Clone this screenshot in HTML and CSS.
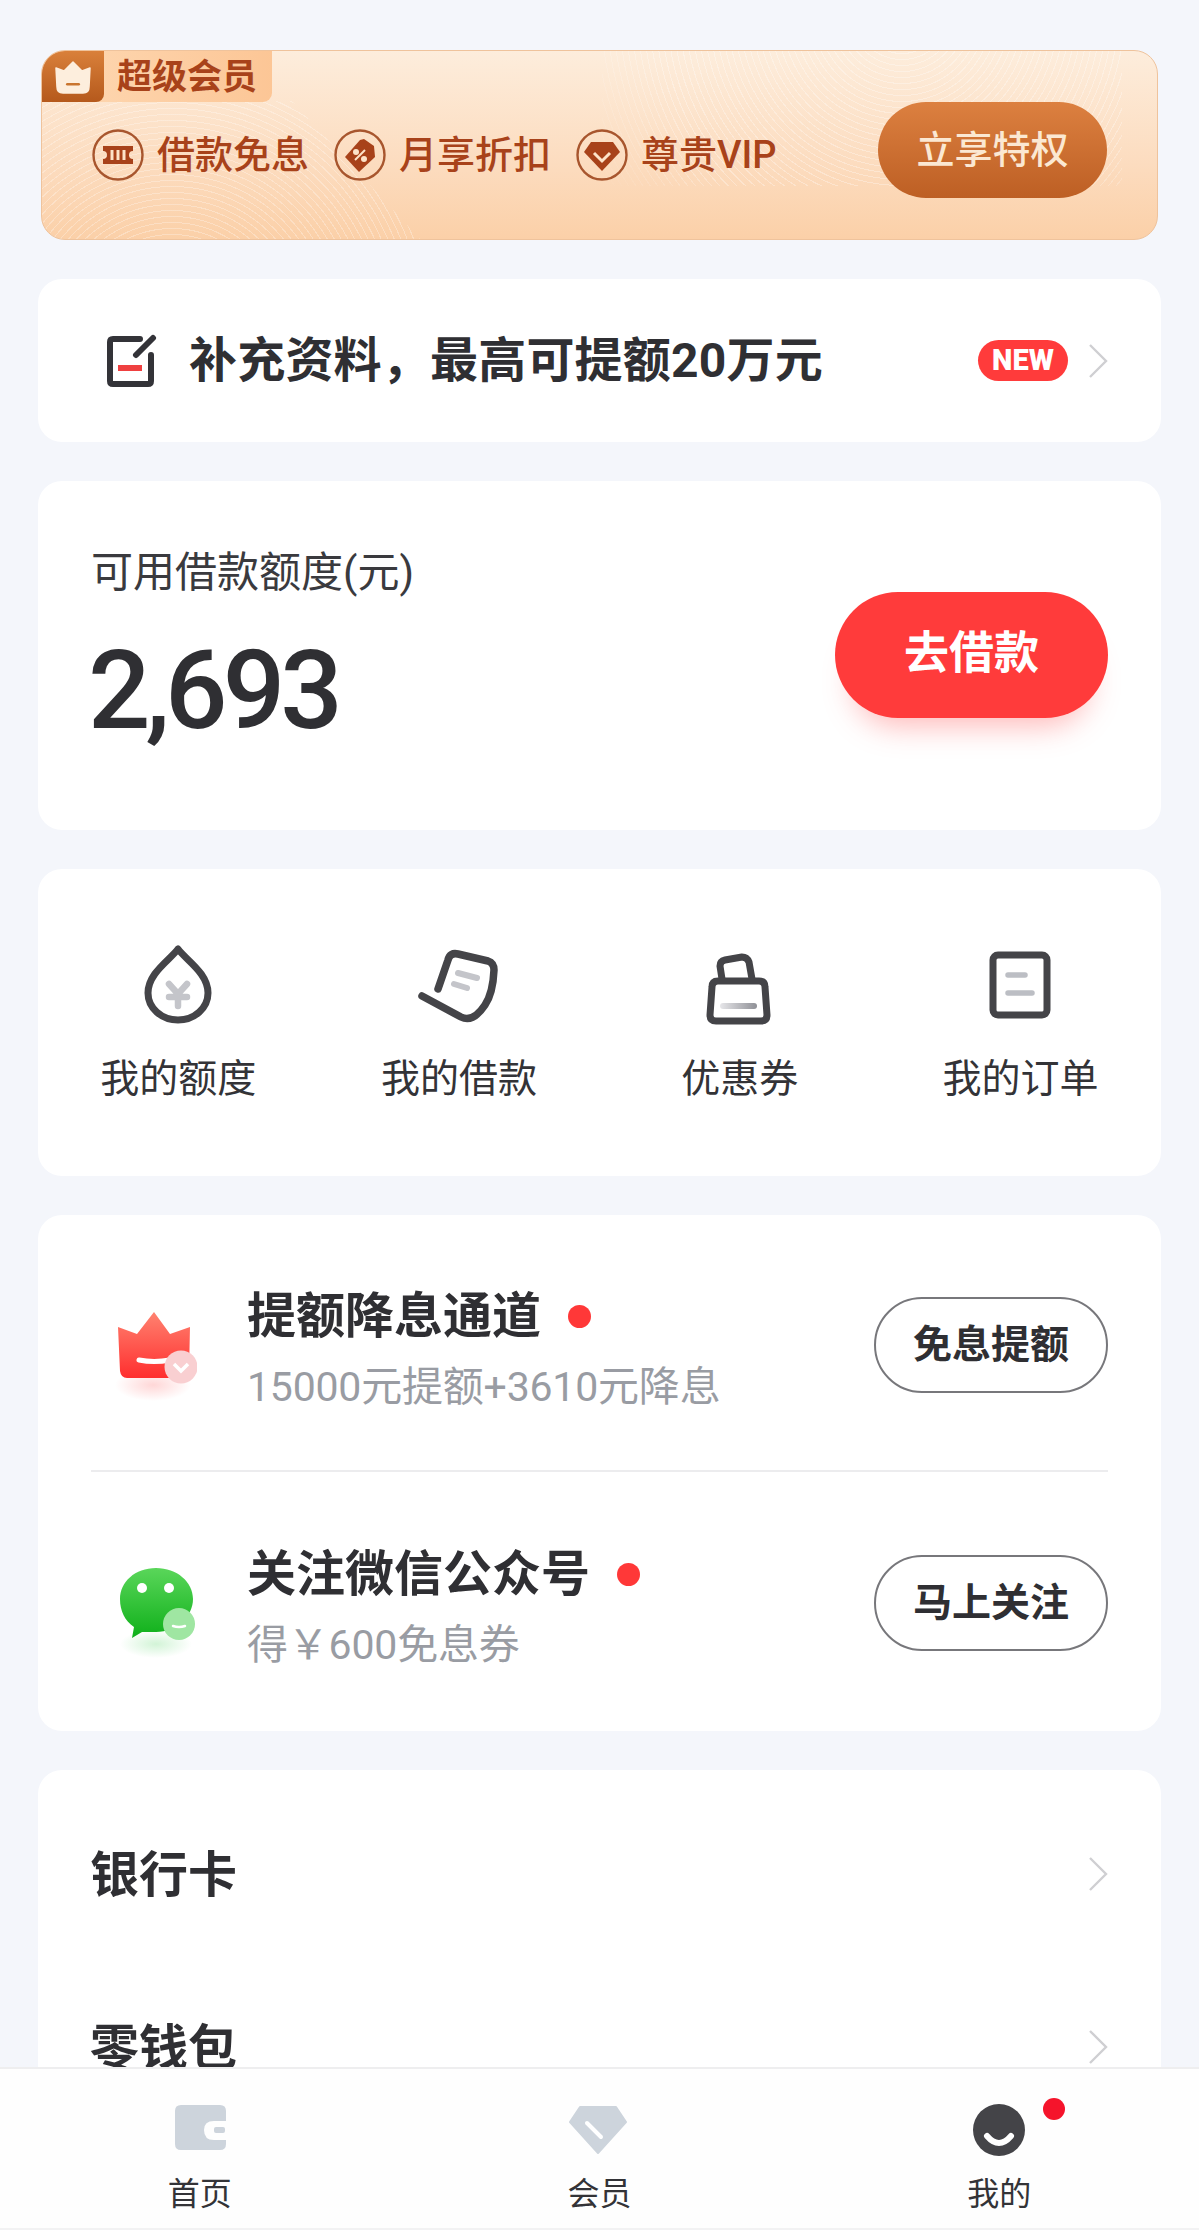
FILE: index.html
```html
<!DOCTYPE html>
<html lang="zh-CN">
<head>
<meta charset="utf-8">
<title>我的</title>
<link rel="stylesheet" href="styles.css">
</head>
<body>
<div class="page">
  <section class="banner">
    <div class="waves-left"></div>
    <div class="waves-right"></div>
    <div class="ribbon">
      <span class="ribbon-icon">
        <svg width="40" height="36" viewBox="0 0 40 36"><path d="M3 9 L11 12 L20 3 L29 12 L37 9 L36 28 Q36 34 30 34 L10 34 Q4 34 4 28 Z" fill="#fdeedd" stroke="#fdeedd" stroke-linejoin="round" stroke-width="1.5"/><rect x="13" y="24" width="14" height="2.5" rx="1.2" fill="#c9752f"/></svg>
      </span>
      <span class="ribbon-text">超级会员</span>
    </div>
    <div class="banner-row">
      <div class="perks">
        <div class="perk">
          <svg class="perk-icon" viewBox="0 0 52 52"><circle cx="26" cy="26" r="24.5" class="perk-ring"/><path d="M11 17 H41 V22 A4 4 0 0 0 41 30 V35 H11 V30 A4 4 0 0 0 11 22 Z" fill="#a8421a"/><path d="M20 21 V31 M26 21 V31 M32 21 V31" stroke="#fde3c9" stroke-width="3"/></svg>
          <span class="perk-text">借款免息</span>
        </div>
        <div class="perk">
          <svg class="perk-icon" viewBox="0 0 52 52"><circle cx="26" cy="26" r="24.5" class="perk-ring"/><path d="M30 10 L40 17 L41 28 L25 43 L11 28 L26 11 Z" fill="#a8421a"/><path d="M21 31 L31 21" stroke="#fde3c9" stroke-width="2"/><circle cx="22" cy="23" r="3" fill="#fde3c9"/><circle cx="30" cy="30" r="3" fill="#fde3c9"/></svg>
          <span class="perk-text">月享折扣</span>
        </div>
        <div class="perk">
          <svg class="perk-icon" viewBox="0 0 52 52"><circle cx="26" cy="26" r="24.5" class="perk-ring"/><path d="M15 13 H37 L44 23 L26 42 L8 23 Z" fill="#a8421a"/><path d="M18 24 L26 32 L34 24" fill="none" stroke="#fde3c9" stroke-width="3"/></svg>
          <span class="perk-text">尊贵VIP</span>
        </div>
      </div>
      <div class="perk-btn">立享特权</div>
    </div>
  </section>

  <section class="card card-info">
    <svg class="edit-icon" width="50" height="54" viewBox="0 0 50 54"><path d="M33 5 H6 Q3 5 3 8 V47 Q3 50 6 50 H41 Q44 50 44 47 V21" fill="none" stroke="#333338" stroke-width="6" stroke-linecap="round"/><path d="M29 21 L46 4" fill="none" stroke="#333338" stroke-width="6" stroke-linecap="round"/><rect x="11" y="31" width="24" height="6" fill="#ef4040"/></svg>
    <span class="info-text">补充资料，最高可提额20万元</span>
    <span class="new-badge">NEW</span>
    <svg class="chevron" width="20" height="36" viewBox="0 0 20 36"><path d="M2 2 L18 18 L2 34" fill="none" stroke="#cfcfd2" stroke-width="2.4"/></svg>
  </section>

  <section class="card card-quota">
    <div class="quota-left">
      <div class="quota-label">可用借款额度(元)</div>
      <div class="quota-num">2,693</div>
    </div>
    <div class="borrow-btn">去借款</div>
  </section>

  <section class="card card-grid">
    <div class="grid-item">
      <svg class="grid-icon" viewBox="0 0 84 84"><path d="M42 6 C34 17 12 30 12 50 A30 27 0 0 0 72 50 C72 30 50 17 42 6 Z" fill="none" stroke="#444448" stroke-width="7" stroke-linejoin="round"/><path d="M33 41 L42 51 L51 41 M33 54 H51 M42 51 V63" fill="none" stroke="#c4c5ca" stroke-width="6.5" stroke-linecap="round"/></svg>
      <span class="grid-label">我的额度</span>
    </div>
    <div class="grid-item">
      <svg class="grid-icon" viewBox="0 0 84 84"><path d="M21 46 L31 17 Q33 9 41 11 L71 18 Q77 20 77 27 Q76 50 68 62 Q56 80 44 74 L5 53" fill="none" stroke="#444448" stroke-width="7.5" stroke-linecap="round" stroke-linejoin="round"/><path d="M41 30 L60 35 M37 41 L50 45" stroke="#c4c5ca" stroke-width="6" stroke-linecap="round"/></svg>
      <span class="grid-label">我的借款</span>
    </div>
    <div class="grid-item">
      <svg class="grid-icon" viewBox="0 0 84 84"><path d="M24 36 L22 23 Q22 18 27 17 L44 14 Q49 14 51 19 L54 36" fill="none" stroke="#444448" stroke-width="7" stroke-linejoin="round"/><path d="M20 38 H61 Q67 38 67 44 L69 72 Q69 78 63 78 H18 Q12 78 12 72 L14 44 Q14 38 20 38 Z" fill="none" stroke="#444448" stroke-width="7"/><defs><linearGradient id="barG" x1="0" x2="1" y1="0" y2="0"><stop offset="0" stop-color="#e6e6e9"/><stop offset="1" stop-color="#8f9096"/></linearGradient></defs><rect x="22" y="60" width="37" height="6" rx="3" fill="url(#barG)"/></svg>
      <span class="grid-label">优惠券</span>
    </div>
    <div class="grid-item">
      <svg class="grid-icon" viewBox="0 0 84 84"><rect x="14" y="12" width="54" height="60" rx="5" fill="none" stroke="#444448" stroke-width="7"/><path d="M29 32 H46 M29 50 H53" stroke="#bcbec4" stroke-width="5.5" stroke-linecap="round"/></svg>
      <span class="grid-label">我的订单</span>
    </div>
  </section>

  <section class="card card-tasks">
    <div class="task">
      <svg class="task-icon" width="84" height="100" viewBox="0 0 84 100"><defs><linearGradient id="crownG" x1="0" x2="0" y1="0" y2="1"><stop offset="0" stop-color="#ff8270"/><stop offset="1" stop-color="#ff2e2e"/></linearGradient><radialGradient id="redSh"><stop offset="0" stop-color="#ff9a9a" stop-opacity=".4"/><stop offset="1" stop-color="#ff9a9a" stop-opacity="0"/></radialGradient><linearGradient id="greenG" x1="0" x2="0" y1="0" y2="1"><stop offset="0" stop-color="#5ad65a"/><stop offset="1" stop-color="#0fb01a"/></linearGradient><radialGradient id="greenSh"><stop offset="0" stop-color="#8fe39a" stop-opacity=".4"/><stop offset="1" stop-color="#8fe39a" stop-opacity="0"/></radialGradient></defs><ellipse cx="40" cy="80" rx="38" ry="16" fill="url(#redSh)"/><path d="M5 22 L24 29 L41 7 L57 29 L77 22 L76 66 Q76 73 68 73 L14 73 Q8 73 7 66 Z" fill="url(#crownG)"/><path d="M26 55 Q41 58 57 55" fill="none" stroke="#fff" stroke-width="5" stroke-linecap="round"/><circle cx="68" cy="62" r="16.5" fill="#f9cfd1"/><path d="M61 59 L68 66 L75 59" fill="none" stroke="#fff" stroke-width="3.5"/></svg>
      <div class="task-body">
        <div class="task-title"><span>提额降息通道</span><i class="dot"></i></div>
        <div class="task-sub">15000元提额+3610元降息</div>
      </div>
      <div class="task-btn">免息提额</div>
    </div>
    <div class="task task-second">
      <svg class="task-icon" width="84" height="100" viewBox="-5 0 84 100"><ellipse cx="38" cy="82" rx="36" ry="14" fill="url(#greenSh)"/><path d="M38 6 C59 6 75 20 75 37 C75 54 59 70 38 70 L24 70 L14 76 L16 65 C7 59 2 49 2 37 C2 20 17 6 38 6 Z" fill="url(#greenG)"/><circle cx="24" cy="26" r="5" fill="#fff"/><circle cx="51" cy="26" r="5" fill="#fff"/><circle cx="61" cy="62" r="16" fill="#9fe6a2"/><path d="M55 64 Q61 66 67 64" fill="none" stroke="#fff" stroke-width="2.5" stroke-linecap="round"/></svg>
      <div class="task-body">
        <div class="task-title"><span>关注微信公众号</span><i class="dot"></i></div>
        <div class="task-sub">得￥600免息券</div>
      </div>
      <div class="task-btn">马上关注</div>
    </div>
  </section>

  <section class="card card-list">
    <div class="list-row"><span class="list-text">银行卡</span><svg class="chevron" width="20" height="36" viewBox="0 0 20 36"><path d="M2 2 L18 18 L2 34" fill="none" stroke="#cfcfd2" stroke-width="2.4"/></svg></div>
    <div class="list-row"><span class="list-text">零钱包</span><svg class="chevron" width="20" height="36" viewBox="0 0 20 36"><path d="M2 2 L18 18 L2 34" fill="none" stroke="#cfcfd2" stroke-width="2.4"/></svg></div>
  </section>

  <nav class="tabbar">
    <div class="tab">
      <svg class="tab-icon" width="60" height="52" viewBox="0 0 60 52"><path d="M11 1 H50 Q56 1 56 7 V17 H44 Q34 17 34 26 Q34 36 44 36 H56 V40 Q56 46 50 46 H11 Q5 46 5 40 V7 Q5 1 11 1 Z" fill="#cdd4dc"/><rect x="44" y="23" width="11" height="6" rx="2" fill="#cdd4dc"/></svg>
      <span class="tab-label">首页</span>
    </div>
    <div class="tab">
      <svg class="tab-icon" width="60" height="52" viewBox="0 0 60 52"><path d="M11 3 H47 L57 18 L29 49 L1 18 Z" fill="#cdd4dc" stroke="#cdd4dc" stroke-width="2" stroke-linejoin="round"/><path d="M18 19 L32 33" stroke="#fff" stroke-width="4" stroke-linecap="round"/></svg>
      <span class="tab-label">会员</span>
    </div>
    <div class="tab">
      <svg class="tab-icon" width="60" height="52" viewBox="0 0 60 52"><circle cx="30" cy="26" r="26" fill="#444448"/><path d="M18 32 Q30 46 42 32" fill="none" stroke="#fff" stroke-width="6" stroke-linecap="round"/></svg>
      <i class="tab-dot"></i>
      <span class="tab-label">我的</span>
    </div>
  </nav>
</div>
</body>
</html>
```

FILE: styles.css
```css
* { box-sizing: border-box; }
html, body { margin: 0; padding: 0; }
body { font-family: Roboto, "Noto Sans CJK SC", sans-serif; color: #2f2f33; background: #f4f6fb; }
.page { position: relative; width: 1199px; height: 2230px; overflow: hidden; padding: 50px 38px 0; background: #f4f6fb; }

.banner { position: relative; height: 190px; margin: 0 3px 39px; border: 1px solid #efc39c; border-radius: 24px; overflow: hidden; background: linear-gradient(180deg, #fdeddc 0%, #fcdcbf 60%, #fbd0a8 100%); }
.waves-left { position: absolute; left: 0; top: 50px; width: 380px; height: 140px; clip-path: polygon(0 0, 250px 0, 380px 140px, 0 140px); background: repeating-radial-gradient(circle at 130px 230px, rgba(255,255,255,.28) 0 1px, rgba(255,255,255,0) 1px 6px); }
.waves-right { position: absolute; left: 560px; top: 0; width: 520px; height: 135px; background: repeating-radial-gradient(circle at 300px -40px, rgba(255,255,255,.3) 0 1px, rgba(255,255,255,0) 1px 6px); -webkit-mask-image: radial-gradient(circle at 300px -40px, #000 70%, transparent 100%); mask-image: radial-gradient(circle at 300px -40px, #000 70%, transparent 100%); }
.ribbon { position: relative; display: flex; width: 230px; height: 51px; border-radius: 0 0 9px 0; background: linear-gradient(90deg, #fed9b4, #fcc696); }
.ribbon-icon { display: flex; align-items: center; justify-content: center; width: 62px; height: 51px; border-radius: 0 0 8px 0; background: linear-gradient(180deg, #d9803a, #b5591c); }
.ribbon-text { margin-left: 13px; font-size: 35px; line-height: 54px; font-weight: 700; color: #a8421a; }
.banner-row { position: relative; display: flex; align-items: flex-start; justify-content: space-between; padding: 0 50px 0 50px; }
.perks { display: flex; gap: 25px; padding-top: 27px; }
.perk { display: flex; align-items: center; gap: 13px; }
.perk-icon { width: 52px; height: 52px; flex: none; }
.perk-ring { fill: none; stroke: #a8562e; stroke-width: 2.4; }
.perk-text { font-size: 38px; line-height: 52px; font-weight: 500; color: #a8421a; }
.perk-btn { width: 229px; height: 96px; border-radius: 48px; background: linear-gradient(180deg, #dc8040, #bd5f24); color: #fbe8d2; font-size: 38px; font-weight: 500; line-height: 96px; text-align: center; }

.card { background: #fff; border-radius: 24px; margin-bottom: 39px; }
.card-info { display: flex; align-items: center; height: 163px; padding: 0 53px 0 69px; }
.edit-icon { flex: none; margin-top: 1px; }
.info-text { flex: 1; margin-left: 32px; font-size: 48px; line-height: 60px; font-weight: 700; letter-spacing: .2px; }
.new-badge { width: 90px; height: 41px; border-radius: 21px; background: #ff3b3b; color: #fff; font-size: 29px; font-weight: 900; line-height: 41px; text-align: center; }
.chevron { flex: none; }
.card-info .chevron { margin-left: 20px; }

.card-quota { display: flex; align-items: center; justify-content: space-between; height: 349px; padding: 0 53px; }
.quota-left { margin-top: -20px; }
.quota-label { font-size: 42px; line-height: 60px; color: #3a3a3e; }
.quota-num { margin: 30px 0 0 -3px; font-size: 110px; line-height: 116px; font-weight: 500; letter-spacing: -5px; }
.borrow-btn { width: 273px; height: 126px; margin-top: -2px; border-radius: 63px; background: #ff3b3b; color: #fff; font-size: 45px; font-weight: 700; line-height: 124px; text-align: center; box-shadow: 0 26px 30px -18px rgba(255,80,80,.4); }

.card-grid { display: grid; grid-template-columns: repeat(4, 1fr); height: 307px; padding-top: 74px; }
.grid-item { display: flex; flex-direction: column; align-items: center; }
.grid-icon { width: 84px; height: 84px; }
.grid-label { margin-top: 25px; font-size: 39px; line-height: 54px; color: #333337; }

.card-tasks { height: 516px; padding: 0 53px; }
.task { display: flex; align-items: center; height: 257px; border-bottom: 2px solid #ececee; }
.task-second { border-bottom: 0; }
.task-icon { flex: none; align-self: flex-start; margin: 90px 0 0 22px; }
.task-body { flex: 1; margin: 11px 0 0 50px; }
.task-title { display: flex; align-items: center; font-size: 49px; line-height: 70px; font-weight: 700; }
.dot { width: 23px; height: 23px; margin-left: 27px; border-radius: 50%; background: #ff3838; }
.task-sub { margin-top: 7px; font-size: 41px; line-height: 56px; letter-spacing: -.2px; color: #999ca3; }
.task-btn { width: 234px; height: 96px; margin-top: 5px; border: 2px solid #77777b; border-radius: 48px; font-size: 39px; font-weight: 700; line-height: 92px; text-align: center; }

.card-list { height: 500px; padding: 19px 53px 0 53px; }
.list-row { display: flex; align-items: center; justify-content: space-between; height: 173px; }
.list-row .chevron { margin-top: -4px; }
.list-text { margin-left: -1px; font-size: 49px; font-weight: 700; line-height: 60px; }

.tabbar { position: absolute; left: 0; right: 0; bottom: 0; display: grid; grid-template-columns: repeat(3, 1fr); height: 163px; padding: 35px 0 0; background: #fefefe; border-top: 2px solid #eeeeef; border-bottom: 2px solid #f2f2f3; }
.tab { position: relative; display: flex; flex-direction: column; align-items: center; }
.tab-icon { display: block; }
.tab-dot { position: absolute; left: 244px; top: -6px; width: 22px; height: 22px; border-radius: 50%; background: #f5142b; }
.tab-label { margin-top: 16px; font-size: 32px; line-height: 44px; color: #333337; }
```
